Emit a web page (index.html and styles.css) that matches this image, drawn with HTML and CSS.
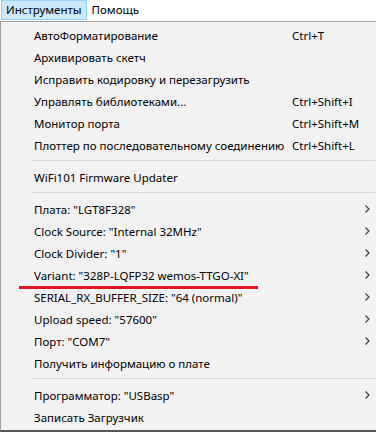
FILE: index.html
```html
<!DOCTYPE html>
<html lang="ru">
<head>
  <meta charset="UTF-8">
  <title>Инструменты</title>
  <link rel="stylesheet" href="styles.css">
</head>
<body>
  <div class="menubar">
    <div class="top-item active">Инструменты</div>
    <div class="top-item">Помощь</div>
  </div>

  <div class="dropdown">
    <div class="row"><span class="label">АвтоФорматирование</span><span class="key">Ctrl+T</span><span class="sub"></span></div>
    <div class="row"><span class="label">Архивировать скетч</span><span class="key"></span><span class="sub"></span></div>
    <div class="row"><span class="label">Исправить кодировку и перезагрузить</span><span class="key"></span><span class="sub"></span></div>
    <div class="row"><span class="label">Управлять библиотеками...</span><span class="key">Ctrl+Shift+I</span><span class="sub"></span></div>
    <div class="row"><span class="label">Монитор порта</span><span class="key">Ctrl+Shift+M</span><span class="sub"></span></div>
    <div class="row"><span class="label">Плоттер по последовательному соединению</span><span class="key">Ctrl+Shift+L</span><span class="sub"></span></div>
    <div class="sep"></div>
    <div class="row"><span class="label">WiFi101 Firmware Updater</span><span class="key"></span><span class="sub"></span></div>
    <div class="sep"></div>
    <div class="row"><span class="label">Плата: "LGT8F328"</span><span class="key"></span><span class="sub"><svg viewBox="0 0 5 8"><path d="M0.5 0.5 L4 4 L0.5 7.5"/></svg></span></div>
    <div class="row"><span class="label">Clock Source: "Internal 32MHz"</span><span class="key"></span><span class="sub"><svg viewBox="0 0 5 8"><path d="M0.5 0.5 L4 4 L0.5 7.5"/></svg></span></div>
    <div class="row"><span class="label">Clock Divider: "1"</span><span class="key"></span><span class="sub"><svg viewBox="0 0 5 8"><path d="M0.5 0.5 L4 4 L0.5 7.5"/></svg></span></div>
    <div class="row"><span class="label">Variant: "328P-LQFP32 wemos-TTGO-XI"</span><span class="key"></span><span class="sub"><svg viewBox="0 0 5 8"><path d="M0.5 0.5 L4 4 L0.5 7.5"/></svg></span></div>
    <div class="row"><span class="label">SERIAL_RX_BUFFER_SIZE: "64 (normal)"</span><span class="key"></span><span class="sub"><svg viewBox="0 0 5 8"><path d="M0.5 0.5 L4 4 L0.5 7.5"/></svg></span></div>
    <div class="row"><span class="label">Upload speed: "57600"</span><span class="key"></span><span class="sub"><svg viewBox="0 0 5 8"><path d="M0.5 0.5 L4 4 L0.5 7.5"/></svg></span></div>
    <div class="row"><span class="label">Порт: "COM7"</span><span class="key"></span><span class="sub"><svg viewBox="0 0 5 8"><path d="M0.5 0.5 L4 4 L0.5 7.5"/></svg></span></div>
    <div class="row"><span class="label">Получить информацию о плате</span><span class="key"></span><span class="sub"></span></div>
    <div class="sep"></div>
    <div class="row"><span class="label">Программатор: "USBasp"</span><span class="key"></span><span class="sub"><svg viewBox="0 0 5 8"><path d="M0.5 0.5 L4 4 L0.5 7.5"/></svg></span></div>
    <div class="row"><span class="label">Записать Загрузчик</span><span class="key"></span><span class="sub"></span></div>

    <div class="mark"></div>
  </div>
</body>
</html>
```

FILE: styles.css
```css
html, body {
  margin: 0;
  padding: 0;
  width: 376px;
  height: 432px;
  overflow: hidden;
  background: #fff;
  font-family: "Noto Sans", "Open Sans", sans-serif;
  font-size: 11.5px;
  color: #000;
}
.menubar {
  display: flex;
  height: 21px;
  padding-left: 1px;
  background: #fff;
}
.top-item {
  box-sizing: border-box;
  height: 20px;
  line-height: 18px;
  padding: 0 4px;
  border: 1px solid transparent;
}
.top-item.active {
  background: #cce8ff;
  border-color: #99d1ff;
}
.dropdown {
  position: relative;
  box-sizing: border-box;
  width: 380px;
  height: 411px;
  padding: 2px 0 0 2px;
  background: #f2f2f2;
  border-top: 1px solid #a0a0a0;
  border-left: 1px solid #a0a0a0;
  border-bottom: 2px solid #555;
}
.row {
  display: flex;
  align-items: center;
  height: 22px;
  padding-left: 31px;
}
.label {
  flex: 1;
  white-space: nowrap;
}
.key {
  width: 73px;
  white-space: nowrap;
}
.sub {
  width: 15px;
  display: flex;
  align-items: center;
}
.sub svg {
  width: 5px;
  height: 8px;
  fill: none;
  stroke: #333;
  stroke-width: 1.1;
}
.sep {
  height: 1px;
  margin: 4px 5px 5px 29px;
  background: #d7d7d7;
}
.mark {
  position: absolute;
  left: 18px;
  top: 264px;
  width: 239px;
  height: 3px;
  background: #e0161f;
}
```
